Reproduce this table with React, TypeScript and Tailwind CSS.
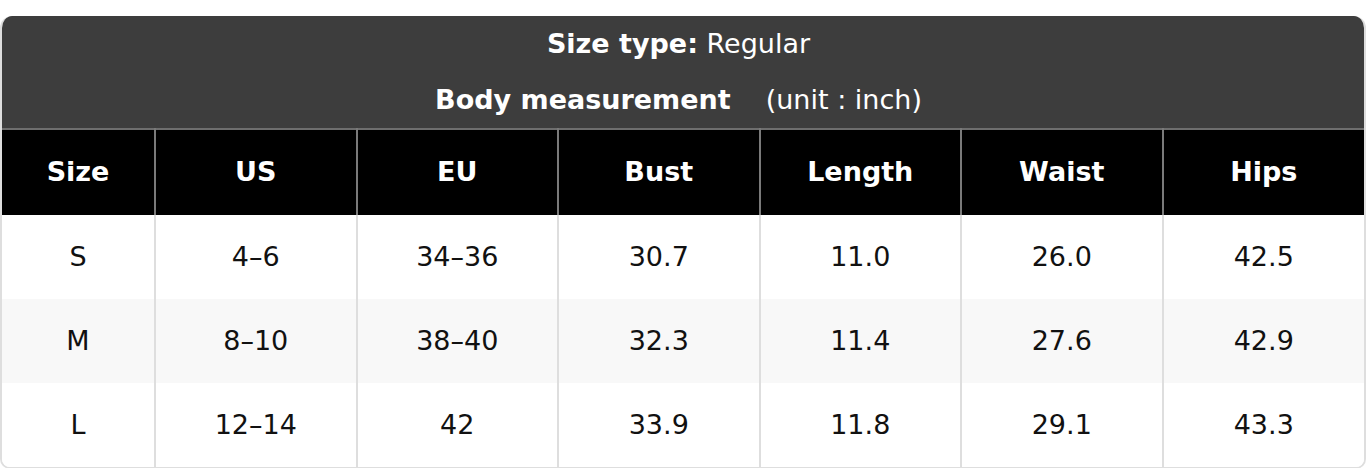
import React from 'react'

const headers = ['Size', 'US', 'EU', 'Bust', 'Length', 'Waist', 'Hips']

const rows = [
  ['S', '4–6', '34–36', '30.7', '11.0', '26.0', '42.5'],
  ['M', '8–10', '38–40', '32.3', '11.4', '27.6', '42.9'],
  ['L', '12–14', '42', '33.9', '11.8', '29.1', '43.3'],
]

export default function App() {
  return (
    <div className="bg-white pt-4 font-['DejaVu_Sans',sans-serif]">
      <div className="rounded-t-[12px] rounded-b-[10px] overflow-hidden border-x-2 border-b-2 border-[#dedede]">
        {/* title block */}
        <div className="bg-[#3d3d3d] text-white text-[27px] text-center -mx-[2px] pr-[9px]">
          <div className="h-[56px] flex items-center justify-center">
            <span>
              <b>Size type:</b> Regular
            </span>
          </div>
          <div className="h-[56px] flex items-center justify-center">
            <b>Body measurement</b>
            <span className="ml-[35px]">(unit : inch)</span>
          </div>
        </div>

        <table className="w-full table-fixed border-collapse text-[27px]">
          <colgroup>
            <col className="w-[153px]" />
            <col />
            <col />
            <col />
            <col />
            <col />
            <col />
          </colgroup>
          <thead>
            <tr className="bg-black text-white h-[86px] border-t-2 border-[#6e6e6e]">
              {headers.map((h, i) => (
                <th
                  key={h}
                  className={`font-bold ${i > 0 ? 'border-l-2 border-[#7a7a7a]' : ''}`}
                >
                  {h}
                </th>
              ))}
            </tr>
          </thead>
          <tbody>
            {rows.map((r, ri) => (
              <tr key={r[0]} className={`h-[84px] text-[#111] ${ri === 1 ? 'bg-[#f8f8f8]' : 'bg-white'}`}>
                {r.map((c, ci) => (
                  <td
                    key={ci}
                    className={`text-center ${ci > 0 ? 'border-l-2 border-[#dedede]' : ''}`}
                  >
                    {c}
                  </td>
                ))}
              </tr>
            ))}
          </tbody>
        </table>
      </div>
    </div>
  )
}
